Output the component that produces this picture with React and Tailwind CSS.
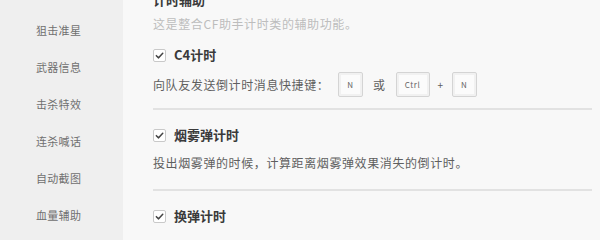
const menu = ['狙击准星', '武器信息', '击杀特效', '连杀喊话', '自动截图', '血量辅助']

function Check({ label }) {
  return (
    <div className="flex h-[20px] items-center gap-[8px]">
      <span className="flex h-[13px] w-[13px] items-center justify-center rounded-[2px] border border-[#c9c9c9] bg-white">
        <svg width="9" height="9" viewBox="0 0 10 10" fill="none">
          <path d="M1.5 5.2 L4 7.6 L8.6 2.6" stroke="#444" strokeWidth="1.7" strokeLinecap="round" strokeLinejoin="round" />
        </svg>
      </span>
      <span className="text-[13px] font-bold leading-[20px] text-[#3a3a3a]">{label}</span>
    </div>
  )
}

function Key({ k, wide }) {
  return (
    <span
      className={`flex h-[25px] ${wide ? 'w-[34px]' : 'w-[25px]'} items-center justify-center rounded-[2px] border border-[#d4d4d4] bg-[#fbfbfb] text-[8px] text-[#666] shadow-[inset_0_0_0_2px_#f1f1f1]`}
    >
      {k}
    </span>
  )
}

export default function App() {
  return (
    <div
      className="flex h-[240px] w-[600px] overflow-hidden bg-[#f8f8f8]"
      style={{ fontFamily: '"Noto Sans CJK SC", "Noto Sans", sans-serif' }}
    >
      <div className="flex w-[123px] shrink-0 flex-col bg-[#efefef] pt-[12px]">
        {menu.map((m) => (
          <div key={m} className="flex h-[37px] items-center pl-[36px] text-[11px] tracking-[0.3px] text-[#707070]">
            {m}
          </div>
        ))}
      </div>

      <div className="flex flex-1 flex-col pl-[30px] pr-[8px]">
        <div className="-mt-[9px] h-[18px] text-[13px] font-bold leading-[18px] text-[#3a3a3a]">计时辅助</div>
        <div className="mt-[6px] text-[12px] leading-[18px] tracking-[0.6px] text-[#bdbdbd]">
          这是整合CF助手计时类的辅助功能。
        </div>

        <div className="mt-[12px]">
          <Check label="C4计时" />
        </div>
        <div className="mt-[7px] flex h-[25px] items-center text-[12px] tracking-[0.6px] text-[#5f5f5f]">
          <span className="w-[185px]">向队友发送倒计时消息快捷键：</span>
          <Key k="N" />
          <span className="mx-[10px]">或</span>
          <Key k="Ctrl" wide />
          <span className="mx-[8px] text-[10px]">+</span>
          <Key k="N" />
        </div>
        <div className="mt-[11px] h-[2px] shrink-0 bg-[#e2e2e2]" />

        <div className="mt-[15px]">
          <Check label="烟雾弹计时" />
        </div>
        <div className="mt-[9px] text-[12px] leading-[18px] tracking-[0.6px] text-[#5f5f5f]">
          投出烟雾弹的时候，计算距离烟雾弹效果消失的倒计时。
        </div>
        <div className="mt-[17px] h-[2px] shrink-0 bg-[#e2e2e2]" />

        <div className="mt-[15px]">
          <Check label="换弹计时" />
        </div>
        <div className="mt-[20px] text-[12px] leading-[18px] tracking-[0.6px] text-[#5f5f5f]">
          换弹的时候，计算当前武器换弹完成的倒计时。
        </div>
      </div>
    </div>
  )
}
